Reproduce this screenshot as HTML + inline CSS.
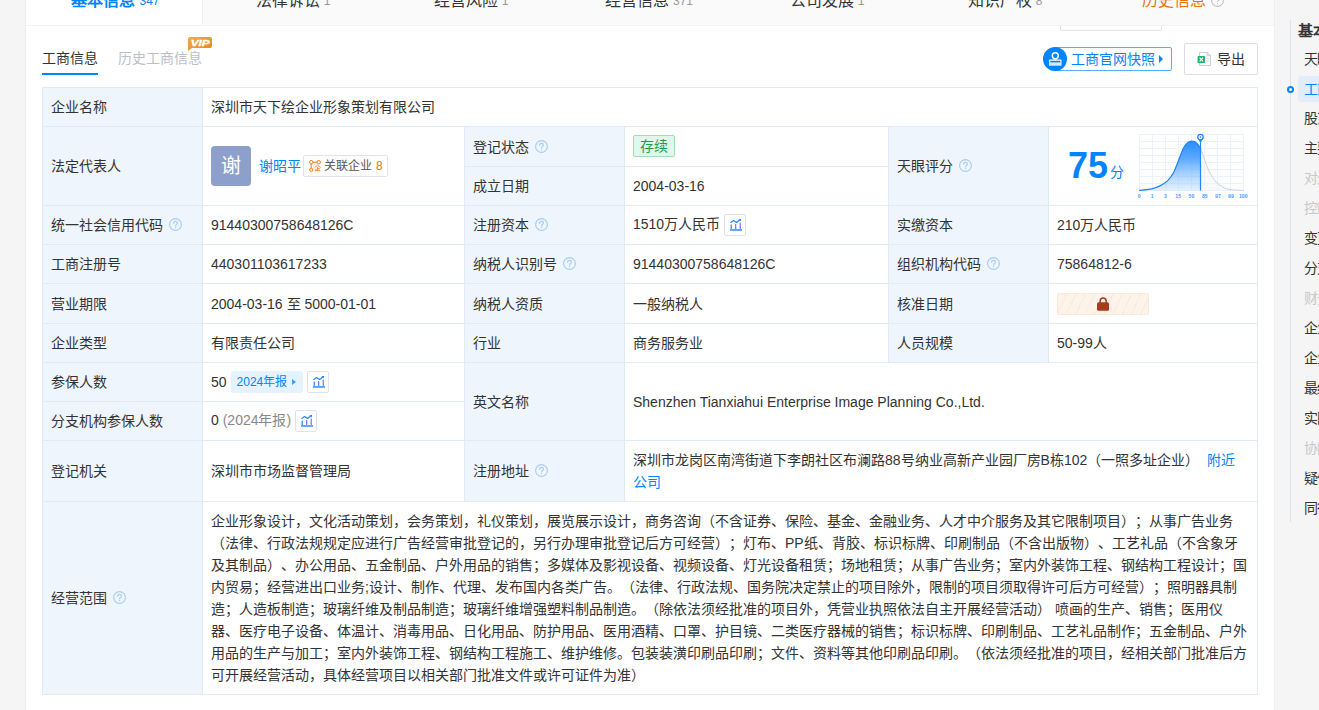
<!DOCTYPE html>
<html lang="zh-CN">
<head>
<meta charset="utf-8">
<title>工商信息</title>
<style>
*{box-sizing:border-box;margin:0;padding:0}
html,body{width:1319px;height:710px;overflow:hidden;background:#f5f5f5;font-family:"Liberation Sans",sans-serif;font-size:14px;color:#333;text-spacing-trim:space-all}
body{position:relative}
a{text-decoration:none;color:#0084ff}
.abs{position:absolute}
svg{display:block}
/* main panel */
#panel{left:25px;top:0;width:1250px;height:710px;background:#fff;border-left:1px solid #efefef;border-right:1px solid #efefef}
/* top nav */
#nav{left:26px;top:0;width:1248px;height:26px;background:#fafafa;border-bottom:1px solid #f2f2f2;overflow:hidden}
#nav .tab{position:absolute;top:-11px;height:37px;width:178px;text-align:center;font-size:16px;line-height:24px;color:#333;white-space:nowrap}
#nav .tab.on{background:#fff;color:#0084ff;border-right:1px solid #f0f0f0;font-weight:bold}
#nav .tab .n{font-size:12px;color:#999;margin-left:4px;position:relative;top:-1.5px;font-weight:normal}
#nav .tab.on .n{color:#0084ff}
#nav .tab.his{color:#e8720e}
/* little box below nav */
#dd{left:1060px;top:10px;width:102px;height:21px;border:1px solid #dfe3ee;border-radius:2px;background:#fff}
/* sub tabs */
.st1{left:42px;top:48px;font-size:14px;line-height:20px;color:#333}
.st1u{left:42px;top:73px;width:56px;height:2px;background:#0084ff}
.st2{left:118px;top:48px;font-size:14px;line-height:20px;color:#b9c0cc}
#vip{left:188px;top:37px;width:24px;height:14px}
/* buttons */
#snap{left:1055px;top:47px;width:117px;height:24px;border:1px solid #59adff;border-radius:2px;background:#fff}
#snapc{left:1043px;top:47px;width:24px;height:24px}
#snapt{left:1071px;top:49px;font-size:14px;line-height:20px;color:#0084ff;white-space:nowrap}
#snapa{left:1159px;top:55px;width:0;height:0;border-left:4px solid #0084ff;border-top:4px solid transparent;border-bottom:4px solid transparent}
#exp{left:1184px;top:43px;width:74px;height:32px;border:1px solid #d9deea;border-radius:2px;background:#fff}
#expi{left:1197px;top:52px;width:15px;height:14px}
#expt{left:1217px;top:49px;font-size:14px;line-height:20px;color:#333}
/* table */
#tb{left:42px;top:87px;width:1215px;border-collapse:collapse;table-layout:fixed;font-size:14px}
#tb td{border:1px solid #e0ebf7;padding:0 8px;vertical-align:middle;line-height:22px;color:#333;background:#fff;white-space:nowrap}
#tb td.h{background:#eff5fc}
#tb td.w{white-space:normal}
.q{display:inline-block;vertical-align:-1px;margin-left:6px}
.ib{display:inline-block;width:22px;height:22px;border:1px solid #dde2ee;border-radius:2px;background:#fff;vertical-align:middle;padding:4px 0 0 5px;position:relative;top:-1px}
.ava{display:inline-block;width:40px;height:40px;border-radius:4px;background:#8da0cb;color:#fff;font-size:20px;line-height:40px;text-align:center;vertical-align:middle}
.nm{color:#0084ff;margin-left:8px;vertical-align:middle}
.rel{display:inline-block;vertical-align:middle;margin-left:2px;height:22px;width:85px;border:1px solid #dfe3ef;border-radius:2px;font-size:12px;line-height:20px;color:#555;position:relative;padding-left:20px;background:#fff}
.rel svg{position:absolute;left:5px;top:4px}
.rel b{color:#ff6a00;font-weight:normal;margin-left:4px}
.stt{position:relative;top:-1px;display:inline-block;width:42px;height:22px;border:1px solid #a5dcb8;border-radius:2px;background:#e2f7eb;color:#1e9e4a;line-height:20px;text-align:center;vertical-align:middle}
.yr{display:inline-block;width:72px;height:22px;border-radius:3px;background:#e5f2ff;color:#0084ff;font-size:12px;line-height:23px;padding-left:6px;vertical-align:middle;margin:0 4px 0 4px;position:relative;top:-1px}
.yr i{position:absolute;left:61px;top:8px;width:0;height:0;border-left:4px solid #3f9fff;border-top:3px solid transparent;border-bottom:3px solid transparent}
.gy{color:#888}
.lock{display:block;width:92px;height:22px;border:1px solid #fbe9db;border-radius:2px;background:#fdf3e9 repeating-linear-gradient(115deg,transparent 0,transparent 7.4px,#faeade 7.4px,#faeade 8.4px);position:relative}
.lock svg{position:absolute;left:38px;top:3px}
.sc{display:flex;align-items:flex-start;height:78px;position:relative}
.sc .num{position:absolute;left:10px;top:17px;font-size:37px;line-height:40px;font-weight:bold;color:#0084ff;letter-spacing:-.5px}
.sc .fen{position:absolute;left:53px;top:37px;font-size:14px;line-height:16px;color:#0084ff}
.sc svg{position:absolute;left:80px;top:3px}
/* sidebar */
#sl{left:1290px;top:20px;width:1px;height:502px;background:#dce3ef}
.sh{left:1298px;font-size:15px;font-weight:bold;color:#333;line-height:20px;white-space:nowrap}
.si{left:1304px;font-size:14px;color:#333;line-height:20px;white-space:nowrap;letter-spacing:-1px}
.si.d{color:#c8c8c8}
.si.a{color:#0084ff}
#sa{left:1298px;top:76px;width:30px;height:26px;border-radius:3px;background:#e3edf9}
#sd{left:1287px;top:85.5px;width:7px;height:7px;border-radius:50%;border:2px solid #0084ff;background:#fff}
</style>
</head>
<body>
<div id="panel" class="abs"></div>
<div id="dd" class="abs"></div>
<div id="nav" class="abs">
  <div class="tab on" style="left:0;width:177px;padding-left:3px">基本信息<span class="n">347</span></div>
  <div class="tab" style="left:178px">法律诉讼<span class="n">1</span></div>
  <div class="tab" style="left:356px">经营风险<span class="n">1</span></div>
  <div class="tab" style="left:534px">经营信息<span class="n">371</span></div>
  <div class="tab" style="left:712px">公司发展<span class="n">1</span></div>
  <div class="tab" style="left:890px">知识产权<span class="n">8</span></div>
  <div class="tab his" style="left:1068px">历史信息<svg style="display:inline-block;margin-left:5px;vertical-align:-1px" width="13" height="13" viewBox="0 0 13 13"><circle cx="6.5" cy="6.5" r="5.9" fill="none" stroke="#c4c4c4" stroke-width="1.1"/><path d="M4.6 5.2c0-1.2.9-1.9 1.9-1.9s1.9.7 1.9 1.7c0 1.3-1.8 1.5-1.8 2.9" fill="none" stroke="#c4c4c4" stroke-width="1.1"/><circle cx="6.55" cy="9.6" r=".65" fill="#c4c4c4"/></svg></div>
</div>
<div class="abs st1">工商信息</div>
<div class="abs st1u"></div>
<div class="abs st2">历史工商信息</div>
<svg id="vip" class="abs" viewBox="0 0 24 14"><defs><linearGradient id="vg" x1="0" y1="0" x2="1" y2="1"><stop offset="0" stop-color="#f3ab4a"/><stop offset="1" stop-color="#e08a1c"/></linearGradient></defs><path d="M2 0H22a2 2 0 0 1 2 2V9a2 2 0 0 1-2 2H4L0 14V2a2 2 0 0 1 2-2Z" fill="url(#vg)"/><text x="12.2" y="9" font-family="Liberation Sans,sans-serif" font-size="9.4" font-weight="bold" font-style="italic" fill="#fff" stroke="#fff" stroke-width=".35" text-anchor="middle" textLength="19" lengthAdjust="spacingAndGlyphs">VIP</text></svg>

<div id="snap" class="abs"></div>
<svg id="snapc" class="abs" viewBox="0 0 24 24"><circle cx="12" cy="12" r="12" fill="#0084ff"/><circle cx="12.3" cy="8.7" r="3" fill="none" stroke="#fff" stroke-width="1.4"/><path d="M11.3 11.3V13.1M13.3 11.3V13.1" stroke="#fff" stroke-width="1.2"/><path d="M6.7 15.4V13.1H17.9V15.4" fill="none" stroke="#fff" stroke-width="1.3"/><rect x="6" y="15.4" width="12.5" height="3.3" fill="#d9ebff"/></svg>
<div id="snapt" class="abs">工商官网快照</div>
<div id="snapa" class="abs"></div>
<div id="exp" class="abs"></div>
<svg id="expi" class="abs" viewBox="0 0 15 14"><path d="M2.5.5H10.3L13.5 3.7V13.5H2.5Z" fill="#fff" stroke="#c7ccd8"/><path d="M10.3.5V3.7H13.5" fill="none" stroke="#c7ccd8"/><path d="M9.4 6.6H12M9.4 9.1H12" stroke="#d3d7e0"/><rect x=".6" y="4" width="7.4" height="7" rx=".7" fill="#1fb268"/><path d="M2.6 5.7 6 9.3M6 5.7 2.6 9.3" stroke="#fff" stroke-width="1.2"/></svg>
<div id="expt" class="abs">导出</div>

<table id="tb" class="abs">
<colgroup><col style="width:160px"><col style="width:262px"><col style="width:160px"><col style="width:264px"><col style="width:160px"><col style="width:209px"></colgroup>
<tr style="height:39px"><td class="h">企业名称</td><td colspan="5">深圳市天下绘企业形象策划有限公司</td></tr>
<tr style="height:40px"><td class="h" rowspan="2">法定代表人</td><td rowspan="2"><span class="ava">谢</span><span class="nm">谢昭平</span><span class="rel"><svg width="13" height="12" viewBox="0 0 13 12"><g fill="none" stroke="#ff7a1a"><circle cx="2.2" cy="2.2" r="1.7"/><circle cx="9.8" cy="2.2" r="1.7"/><circle cx="2.2" cy="9.8" r="1.7"/><path d="M3.9 2.2H8.1M2.2 3.9V8.1"/><path d="M5.6 7.7 8.6 5 11.6 7.7M8.6 6.8V10.6M5.8 10.7H11.5M8.6 8.7H10.6M6.9 8.8V10.6" stroke-width=".9"/></g></svg>关联企业<b>8</b></span></td><td class="h">登记状态<svg class="q" width="13" height="13" viewBox="0 0 13 13"><circle cx="6.5" cy="6.5" r="5.9" fill="none" stroke="#aacdf0" stroke-width="1.2"/><path d="M4.6 5.2c0-1.2.9-1.9 1.9-1.9s1.9.7 1.9 1.7c0 1.3-1.8 1.5-1.8 2.9" fill="none" stroke="#aacdf0" stroke-width="1.2" stroke-linecap="round"/><circle cx="6.55" cy="9.6" r=".65" fill="#aacdf0"/></svg></td><td><span class="stt">存续</span></td><td class="h" rowspan="2">天眼评分<svg class="q" width="13" height="13" viewBox="0 0 13 13"><circle cx="6.5" cy="6.5" r="5.9" fill="none" stroke="#aacdf0" stroke-width="1.2"/><path d="M4.6 5.2c0-1.2.9-1.9 1.9-1.9s1.9.7 1.9 1.7c0 1.3-1.8 1.5-1.8 2.9" fill="none" stroke="#aacdf0" stroke-width="1.2" stroke-linecap="round"/><circle cx="6.55" cy="9.6" r=".65" fill="#aacdf0"/></svg></td><td rowspan="2"></td></tr>
<tr style="height:39px"><td class="h">成立日期</td><td>2004-03-16</td></tr>
<tr style="height:39px"><td class="h">统一社会信用代码<svg class="q" width="13" height="13" viewBox="0 0 13 13"><circle cx="6.5" cy="6.5" r="5.9" fill="none" stroke="#aacdf0" stroke-width="1.2"/><path d="M4.6 5.2c0-1.2.9-1.9 1.9-1.9s1.9.7 1.9 1.7c0 1.3-1.8 1.5-1.8 2.9" fill="none" stroke="#aacdf0" stroke-width="1.2" stroke-linecap="round"/><circle cx="6.55" cy="9.6" r=".65" fill="#aacdf0"/></svg></td><td>91440300758648126C</td><td class="h">注册资本<svg class="q" width="13" height="13" viewBox="0 0 13 13"><circle cx="6.5" cy="6.5" r="5.9" fill="none" stroke="#aacdf0" stroke-width="1.2"/><path d="M4.6 5.2c0-1.2.9-1.9 1.9-1.9s1.9.7 1.9 1.7c0 1.3-1.8 1.5-1.8 2.9" fill="none" stroke="#aacdf0" stroke-width="1.2" stroke-linecap="round"/><circle cx="6.55" cy="9.6" r=".65" fill="#aacdf0"/></svg></td><td>1510万人民币<span style="display:inline-block;width:4px"></span><span class="ib"><svg width="12" height="12" viewBox="0 0 12 12"><rect x="0" y="10" width="12" height="1.9" fill="#5aa5ff"/><rect x=".6" y="5.6" width="1.3" height="4.4" fill="#2f8fff"/><rect x="5" y="5" width="1.3" height="5" fill="#7a7dff"/><rect x="9.6" y="3.6" width="1.3" height="6.4" fill="#7a7dff"/><path d="M.4 3.9 3.4 1.5 6.6 3.4 9.8 1" fill="none" stroke="#1f86ff" stroke-width="1.2" stroke-linejoin="round"/><path d="M8.4 0 11 0 11 2.6Z" fill="#1f86ff"/></svg></span></td><td class="h">实缴资本</td><td>210万人民币</td></tr>
<tr style="height:39px"><td class="h">工商注册号</td><td>440301103617233</td><td class="h">纳税人识别号<svg class="q" width="13" height="13" viewBox="0 0 13 13"><circle cx="6.5" cy="6.5" r="5.9" fill="none" stroke="#aacdf0" stroke-width="1.2"/><path d="M4.6 5.2c0-1.2.9-1.9 1.9-1.9s1.9.7 1.9 1.7c0 1.3-1.8 1.5-1.8 2.9" fill="none" stroke="#aacdf0" stroke-width="1.2" stroke-linecap="round"/><circle cx="6.55" cy="9.6" r=".65" fill="#aacdf0"/></svg></td><td>91440300758648126C</td><td class="h">组织机构代码<svg class="q" width="13" height="13" viewBox="0 0 13 13"><circle cx="6.5" cy="6.5" r="5.9" fill="none" stroke="#aacdf0" stroke-width="1.2"/><path d="M4.6 5.2c0-1.2.9-1.9 1.9-1.9s1.9.7 1.9 1.7c0 1.3-1.8 1.5-1.8 2.9" fill="none" stroke="#aacdf0" stroke-width="1.2" stroke-linecap="round"/><circle cx="6.55" cy="9.6" r=".65" fill="#aacdf0"/></svg></td><td>75864812-6</td></tr>
<tr style="height:40px"><td class="h">营业期限</td><td>2004-03-16 至 5000-01-01</td><td class="h">纳税人资质</td><td>一般纳税人</td><td class="h">核准日期</td><td><span class="lock"><svg width="14" height="15" viewBox="0 0 14 15"><rect x="1" y="5.2" width="12" height="8.5" rx="1.5" fill="#a63c1e"/><path d="M4.2 5.8V4a3 3 0 0 1 6 0V5.8" fill="none" stroke="#a63c1e" stroke-width="1.6"/></svg></span></td></tr>
<tr style="height:39px"><td class="h">企业类型</td><td>有限责任公司</td><td class="h">行业</td><td>商务服务业</td><td class="h">人员规模</td><td>50-99人</td></tr>
<tr style="height:39px"><td class="h">参保人数</td><td><span style="position:relative;top:1px">50</span><span class="yr">2024年报<i></i></span><span class="ib"><svg width="12" height="12" viewBox="0 0 12 12"><rect x="0" y="10" width="12" height="1.9" fill="#5aa5ff"/><rect x=".6" y="5.6" width="1.3" height="4.4" fill="#2f8fff"/><rect x="5" y="5" width="1.3" height="5" fill="#7a7dff"/><rect x="9.6" y="3.6" width="1.3" height="6.4" fill="#7a7dff"/><path d="M.4 3.9 3.4 1.5 6.6 3.4 9.8 1" fill="none" stroke="#1f86ff" stroke-width="1.2" stroke-linejoin="round"/><path d="M8.4 0 11 0 11 2.6Z" fill="#1f86ff"/></svg></span></td><td class="h" rowspan="2">英文名称</td><td rowspan="2" colspan="3">Shenzhen Tianxiahui Enterprise Image Planning Co.,Ltd.</td></tr>
<tr style="height:39px"><td class="h">分支机构参保人数</td><td>0 <span class="gy">(2024年报)</span><span style="display:inline-block;width:4px"></span><span class="ib"><svg width="12" height="12" viewBox="0 0 12 12"><rect x="0" y="10" width="12" height="1.9" fill="#5aa5ff"/><rect x=".6" y="5.6" width="1.3" height="4.4" fill="#2f8fff"/><rect x="5" y="5" width="1.3" height="5" fill="#7a7dff"/><rect x="9.6" y="3.6" width="1.3" height="6.4" fill="#7a7dff"/><path d="M.4 3.9 3.4 1.5 6.6 3.4 9.8 1" fill="none" stroke="#1f86ff" stroke-width="1.2" stroke-linejoin="round"/><path d="M8.4 0 11 0 11 2.6Z" fill="#1f86ff"/></svg></span></td></tr>
<tr style="height:61px"><td class="h">登记机关</td><td>深圳市市场监督管理局</td><td class="h">注册地址<svg class="q" width="13" height="13" viewBox="0 0 13 13"><circle cx="6.5" cy="6.5" r="5.9" fill="none" stroke="#aacdf0" stroke-width="1.2"/><path d="M4.6 5.2c0-1.2.9-1.9 1.9-1.9s1.9.7 1.9 1.7c0 1.3-1.8 1.5-1.8 2.9" fill="none" stroke="#aacdf0" stroke-width="1.2" stroke-linecap="round"/><circle cx="6.55" cy="9.6" r=".65" fill="#aacdf0"/></svg></td><td colspan="3" class="w">深圳市龙岗区南湾街道下李朗社区布澜路88号纳业高新产业园厂房B栋102（一照多址企业）<a style="margin-left:8px">附近公司</a></td></tr>
<tr style="height:193px"><td class="h">经营范围<svg class="q" width="13" height="13" viewBox="0 0 13 13"><circle cx="6.5" cy="6.5" r="5.9" fill="none" stroke="#aacdf0" stroke-width="1.2"/><path d="M4.6 5.2c0-1.2.9-1.9 1.9-1.9s1.9.7 1.9 1.7c0 1.3-1.8 1.5-1.8 2.9" fill="none" stroke="#aacdf0" stroke-width="1.2" stroke-linecap="round"/><circle cx="6.55" cy="9.6" r=".65" fill="#aacdf0"/></svg></td><td colspan="5" class="w">企业形象设计，文化活动策划，会务策划，礼仪策划，展览展示设计，商务咨询（不含证券、保险、基金、金融业务、人才中介服务及其它限制项目）；从事广告业务（法律、行政法规规定应进行广告经营审批登记的，另行办理审批登记后方可经营）；灯布、PP纸、背胶、标识标牌、印刷制品（不含出版物）、工艺礼品（不含象牙及其制品）、办公用品、五金制品、户外用品的销售；多媒体及影视设备、视频设备、灯光设备租赁；场地租赁；从事广告业务；室内外装饰工程、钢结构工程设计；国内贸易；经营进出口业务;设计、制作、代理、发布国内各类广告。（法律、行政法规、国务院决定禁止的项目除外，限制的项目须取得许可后方可经营）；照明器具制造；人造板制造；玻璃纤维及制品制造；玻璃纤维增强塑料制品制造。（除依法须经批准的项目外，凭营业执照依法自主开展经营活动） 喷画的生产、销售；医用仪器、医疗电子设备、体温计、消毒用品、日化用品、防护用品、医用酒精、口罩、护目镜、二类医疗器械的销售；标识标牌、印刷制品、工艺礼品制作；五金制品、户外用品的生产与加工；室内外装饰工程、钢结构工程施工、维护维修。包装装潢印刷品印刷；文件、资料等其他印刷品印刷。（依法须经批准的项目，经相关部门批准后方可开展经营活动，具体经营项目以相关部门批准文件或许可证件为准）</td></tr>
</table>
<div class="abs" style="left:1068px;top:146px;font-size:36px;line-height:40px;font-weight:bold;color:#0084ff">75</div>
<div class="abs" style="left:1110px;top:163px;font-size:14px;line-height:18px;color:#0084ff">分</div>
<svg id="chart" class="abs" style="left:1136px;top:130px" width="116" height="74" viewBox="0 0 116 74">
<defs><linearGradient id="gf" x1="0" y1="0" x2="0" y2="1"><stop offset="0" stop-color="#2b8eff"/><stop offset=".35" stop-color="#4a9fff" stop-opacity=".9"/><stop offset="1" stop-color="#8fc4ff" stop-opacity=".25"/></linearGradient></defs>
<g stroke="#ebf2fb" stroke-width="1" fill="none"><path d="M3.5 4V61"/><path d="M16.5 4V61"/><path d="M29.5 4V61"/><path d="M42.5 4V61"/><path d="M55.5 4V61"/><path d="M68.5 4V61"/><path d="M81.5 4V61"/><path d="M94.5 4V61"/><path d="M107.5 4V61"/><path d="M3 4.5H108"/><path d="M3 11.5H108"/><path d="M3 18.5H108"/><path d="M3 25.5H108"/><path d="M3 32.5H108"/><path d="M3 39.5H108"/><path d="M3 46.5H108"/><path d="M3 53.5H108"/><path d="M3 60.5H108"/></g>
<path d="M3.1 60.5C5.2 60.2 12.1 59.6 15.5 58.9C18.9 58.2 20.9 57.5 23.5 56.2C26.1 54.9 29.0 53.2 31.4 50.9C33.8 48.6 35.9 45.7 37.8 42.2C39.7 38.8 41.0 34.2 42.6 30.2C44.2 26.2 46.0 21.1 47.4 18.3C48.8 15.5 49.9 14.5 50.9 13.4C51.9 12.3 52.6 12.1 53.4 11.7C54.2 11.3 55.1 11.1 55.9 11.1C56.7 11.1 57.6 11.3 58.4 11.7C59.2 12.1 59.9 12.3 60.9 13.4C61.9 14.5 63.9 17.5 64.5 18.3V60.5Z" fill="url(#gf)"/>
<path d="M64.5 18.3C65.8 21.1 67.4 26.5 68.8 30.2C70.2 33.9 71.1 37.1 72.8 40.6C74.5 44.1 76.8 48.1 79.2 50.9C81.6 53.7 84.6 55.8 87.2 57.3C89.8 58.8 91.6 59.2 95.1 59.7C98.5 60.2 105.8 60.4 107.9 60.5H64.5Z" fill="#eef1f5" fill-opacity=".45"/>
<path d="M64.5 18.3C65.8 21.1 67.4 26.5 68.8 30.2C70.2 33.9 71.1 37.1 72.8 40.6C74.5 44.1 76.8 48.1 79.2 50.9C81.6 53.7 84.6 55.8 87.2 57.3C89.8 58.8 91.6 59.2 95.1 59.7C98.5 60.2 105.8 60.4 107.9 60.5" fill="none" stroke="#c7d4e2" stroke-width="1"/>
<path d="M3.1 60.5C5.2 60.2 12.1 59.6 15.5 58.9C18.9 58.2 20.9 57.5 23.5 56.2C26.1 54.9 29.0 53.2 31.4 50.9C33.8 48.6 35.9 45.7 37.8 42.2C39.7 38.8 41.0 34.2 42.6 30.2C44.2 26.2 46.0 21.1 47.4 18.3C48.8 15.5 49.9 14.5 50.9 13.4C51.9 12.3 52.6 12.1 53.4 11.7C54.2 11.3 55.1 11.1 55.9 11.1C56.7 11.1 57.6 11.3 58.4 11.7C59.2 12.1 59.9 12.3 60.9 13.4C61.9 14.5 63.9 17.5 64.5 18.3" fill="none" stroke="#1f86ff" stroke-width="1.3"/>
<path d="M64.5 12V60.5" stroke="#1f86ff" stroke-width="1.2"/>
<path d="M62.3 8.6 66.7 8.6 64.5 13.4Z" fill="#1f86ff"/>
<circle cx="64.5" cy="7.1" r="2.7" fill="#fff" stroke="#1f86ff" stroke-width="1.3"/>
<circle cx="64.5" cy="7.1" r=".8" fill="#1f86ff"/>
<g font-family="Liberation Sans,sans-serif" font-size="5.2" font-weight="bold" fill="#4a9cff" text-anchor="middle"><text x="3.3" y="68">0</text><text x="16.3" y="68">1</text><text x="29.5" y="68">3</text><text x="42.2" y="68">15</text><text x="55.5" y="68">50</text><text x="68.8" y="68">85</text><text x="82" y="68">97</text><text x="95" y="68">99</text><text x="107.3" y="68">100</text></g>
</svg>
<div id="sl" class="abs"></div>
<div id="sa" class="abs"></div>
<div id="sd" class="abs"></div>
<div class="abs sh" style="top:21px">基本信息</div>
<div class="abs si " style="top:49px">天眼</div>
<div class="abs si a" style="top:79px">工商</div>
<div class="abs si " style="top:108px">股东</div>
<div class="abs si " style="top:138px">主要</div>
<div class="abs si d" style="top:168px">对外</div>
<div class="abs si d" style="top:198px">控制</div>
<div class="abs si " style="top:228px">变更</div>
<div class="abs si " style="top:258px">分支</div>
<div class="abs si d" style="top:288px">财务</div>
<div class="abs si " style="top:318px">企业</div>
<div class="abs si " style="top:348px">企业</div>
<div class="abs si " style="top:378px">最终</div>
<div class="abs si " style="top:408px">实际</div>
<div class="abs si d" style="top:438px">协同</div>
<div class="abs si " style="top:468px">疑似</div>
<div class="abs si " style="top:498px">同行</div>

</body>
</html>
